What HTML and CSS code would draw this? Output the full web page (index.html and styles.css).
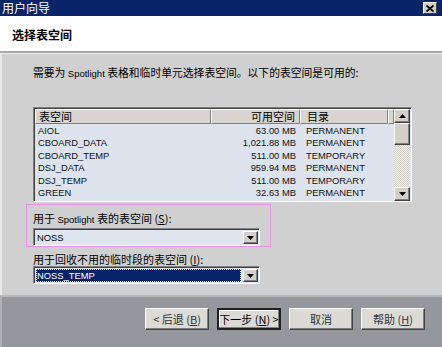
FILE: index.html
```html
<!DOCTYPE html>
<html>
<head>
<meta charset="utf-8">
<link rel="stylesheet" href="styles.css">
</head>
<body>
<div class="window">
  <div class="titlebar">
    <span class="title">用户向导</span>
    <span class="close">
      <svg width="8" height="7" viewBox="0 0 8 7"><path d="M0.5 0.5 L7.5 6.5 M7.5 0.5 L0.5 6.5" stroke="#000" stroke-width="1.8"/></svg>
    </span>
  </div>
  <div class="header"><span class="heading">选择表空间</span></div>
  <div class="hsep"></div>
  <div class="body">
    <p class="desc">需要为 <span class="lat">Spotlight</span> 表格和临时单元选择表空间。以下的表空间是可用的:</p>
    <div class="list">
      <div class="listmain">
        <div class="lhead">
          <div class="hc c1">表空间</div>
          <div class="hc c2">可用空间</div>
          <div class="hc c3">目录</div>
          <div class="hc c4"></div>
        </div>
        <div class="rows">
          <div class="row"><span class="c1">AIOL</span><span class="c2">63.00 MB</span><span class="c3">PERMANENT</span></div>
          <div class="row"><span class="c1">CBOARD_DATA</span><span class="c2">1,021.88 MB</span><span class="c3">PERMANENT</span></div>
          <div class="row"><span class="c1">CBOARD_TEMP</span><span class="c2">511.00 MB</span><span class="c3">TEMPORARY</span></div>
          <div class="row"><span class="c1">DSJ_DATA</span><span class="c2">959.94 MB</span><span class="c3">PERMANENT</span></div>
          <div class="row"><span class="c1">DSJ_TEMP</span><span class="c2">511.00 MB</span><span class="c3">TEMPORARY</span></div>
          <div class="row"><span class="c1">GREEN</span><span class="c2">32.63 MB</span><span class="c3">PERMANENT</span></div>
        </div>
      </div>
      <div class="vscroll">
        <div class="sbtn"><svg width="7" height="4" viewBox="0 0 7 4"><path d="M3.5 0 L7 4 L0 4 Z" fill="#000"/></svg></div>
        <div class="thumb"></div>
        <div class="track"></div>
        <div class="sbtn"><svg width="7" height="4" viewBox="0 0 7 4"><path d="M0 0 L7 0 L3.5 4 Z" fill="#000"/></svg></div>
      </div>
    </div>
    <div class="pinkbox">
      <div class="label">用于 <span class="lat">Spotlight</span> 表的表空间 (<u>S</u>):</div>
      <div class="combo">
        <span class="cval">NOSS</span>
        <span class="cbtn"><svg width="7" height="4" viewBox="0 0 7 4"><path d="M0 0 L7 0 L3.5 4 Z" fill="#000"/></svg></span>
      </div>
    </div>
    <div class="group2">
      <div class="label">用于回收不用的临时段的表空间 (<u>I</u>):</div>
      <div class="combo">
        <span class="cval sel">NOSS_TEMP</span>
        <span class="cbtn"><svg width="7" height="4" viewBox="0 0 7 4"><path d="M0 0 L7 0 L3.5 4 Z" fill="#000"/></svg></span>
      </div>
    </div>
  </div>
  <div class="footer">
    <button class="btn">&lt; 后退 (<u>B</u>)</button>
    <button class="btn default">下一步 (<u>N</u>) &gt;</button>
    <button class="btn">取消</button>
    <button class="btn">帮助 (<u>H</u>)</button>
  </div>
</div>
</body>
</html>
```

FILE: styles.css
```css
html, body {
  margin: 0;
  padding: 0;
}
body {
  font-family: "Liberation Sans", "Noto Sans CJK SC", sans-serif;
  font-size: 11px;
  color: #000;
}
.window {
  width: 442px;
  height: 347px;
  display: flex;
  flex-direction: column;
  overflow: hidden;
  background: #d0d0d0;
}
.titlebar {
  height: 16px;
  background: #0a246a;
  display: flex;
  align-items: center;
  justify-content: space-between;
  padding: 0 5px 0 2px;
  flex: none;
}
.title {
  color: #fff;
  font-family: "Noto Sans CJK SC", sans-serif;
  font-size: 12px;
  line-height: 16px;
}
.close {
  width: 12px;
  height: 10px;
  background: #d4d0c8;
  border: 1px solid;
  border-color: #fff #404040 #404040 #fff;
  display: flex;
  align-items: center;
  justify-content: center;
}
.header {
  height: 35px;
  background: #fff;
  display: flex;
  align-items: center;
  padding-left: 12px;
  flex: none;
}
.heading {
  font-family: "Noto Sans CJK SC", sans-serif;
  font-weight: bold;
  font-size: 12px;
  margin-top: 1px;
}
.hsep {
  height: 3px;
  border-top: 2px solid #a8a8a8;
  background: #ececec;
  box-sizing: border-box;
  flex: none;
}
.body {
  height: 241px;
  flex: none;
  box-sizing: border-box;
  padding: 11px 0 0 33px;
  border-left: 2px solid #e8e8e8;
  display: flex;
  flex-direction: column;
  align-items: flex-start;
}
.body > * { margin-left: -2px; }
.desc {
  margin-top: 0;
  margin-bottom: 0;
  line-height: 14px;
  font-family: "Noto Sans CJK SC", sans-serif;
  font-size: 10.8px;
}
.lat {
  font-family: "Liberation Sans", sans-serif;
  font-size: 9.5px;
}
.list {
  margin-top: 26px;
  width: 379px;
  height: 95px;
  box-sizing: border-box;
  border: 1px solid;
  border-color: #808080 #fff #fff #808080;
  box-shadow: inset 1px 1px 0 #404040;
  padding: 1px 1px 0 1px;
  background: #dce3ec;
  display: flex;
  overflow: hidden;
}
.listmain {
  width: 359px;
  display: flex;
  flex-direction: column;
}
.lhead {
  display: flex;
  height: 15px;
  flex: none;
}
.hc {
  box-sizing: border-box;
  height: 15px;
  background: #d8d5d0;
  border: 1px solid;
  border-color: #fff #808080 #808080 #fff;
  line-height: 13px;
  font-family: "Noto Sans CJK SC", sans-serif;
  font-size: 11px;
  padding: 0 3px;
}
.c1 { width: 176px; box-sizing: border-box; padding-left: 3px; }
.c2 { width: 89px; box-sizing: border-box; text-align: right; padding-right: 4px; }
.c3 { width: 88px; box-sizing: border-box; padding-left: 6px; }
.c4 { width: 6px; padding: 0; }
.hc.c1 { padding-left: 3px; }
.hc.c3 { padding-left: 6px; }
.rows {
  padding-top: 1px;
}
.row {
  display: flex;
  height: 12.4px;
  line-height: 12.4px;
  font-family: "Liberation Sans", sans-serif;
  font-size: 9.4px;
  color: #111;
  white-space: nowrap;
}
.vscroll {
  width: 16px;
  display: flex;
  flex-direction: column;
  flex: none;
}
.sbtn, .thumb {
  box-sizing: border-box;
  background: #d4d0c8;
  border: 1px solid;
  border-color: #fff #404040 #404040 #fff;
  box-shadow: inset -1px -1px 0 #808080;
  flex: none;
}
.sbtn {
  height: 14px;
  display: flex;
  align-items: center;
  justify-content: center;
}
.thumb {
  height: 22px;
}
.track {
  flex: 1;
  background-color: #f0f0f0;
  background-image: linear-gradient(45deg, #d4d0c8 25%, transparent 25%, transparent 75%, #d4d0c8 75%), linear-gradient(45deg, #d4d0c8 25%, transparent 25%, transparent 75%, #d4d0c8 75%);
  background-size: 2px 2px;
  background-position: 0 0, 1px 1px;
}
.pinkbox {
  margin-top: 2px;
  margin-left: -9px;
  width: 245px;
  height: 43px;
  box-sizing: border-box;
  border: 1px solid #e98ee9;
  padding: 6px 9px 0 6px;
}
.label {
  font-family: "Noto Sans CJK SC", sans-serif;
  font-size: 11px;
  line-height: 14px;
  white-space: nowrap;
}
.label .lat { font-size: 9.5px; }
.combo {
  margin-top: 1px;
  width: 227px;
  height: 18px;
  box-sizing: border-box;
  border: 1px solid;
  border-color: #808080 #fff #fff #808080;
  box-shadow: inset 1px 1px 0 #404040;
  padding: 2px 1px 1px 2px;
  background: #dfe6ef;
  display: flex;
  align-items: stretch;
}
.cval {
  flex: 1;
  font-family: "Liberation Sans", sans-serif;
  font-size: 9.4px;
  line-height: 13px;
  padding-left: 1px;
}
.cval.sel {
  background: #0a246a;
  color: #fff;
  margin-right: 2px;
  outline: 1px dotted #ffff80;
  outline-offset: -1px;
}
.cbtn {
  width: 15px;
  box-sizing: border-box;
  background: #d4d0c8;
  border: 1px solid;
  border-color: #fff #404040 #404040 #fff;
  box-shadow: inset -1px -1px 0 #808080;
  display: flex;
  align-items: center;
  justify-content: center;
}
.group2 {
  margin-top: 5px;
}
.group2 .combo { height: 18px; margin-top: 0; }
.footer {
  flex: 1;
  background: #96979c;
  border-top: 2px solid #b8b8b8;
  border-left: 2px solid #b0b0b4;
  display: flex;
  justify-content: flex-end;
  align-items: flex-start;
  gap: 8px;
  padding: 11px 17px 0 0;
}
.btn {
  width: 64px;
  height: 22px;
  box-sizing: border-box;
  background: #dcdad6;
  border: 1px solid;
  border-color: #fff #404040 #404040 #fff;
  box-shadow: inset -1px -1px 0 #808080;
  font-family: "Noto Sans CJK SC", sans-serif;
  font-size: 11px;
  color: #333;
  padding: 0;
  margin: 0;
  line-height: 18px;
  white-space: nowrap;
}
.btn.default {
  border: 2px solid #202020;
  box-shadow: inset -1px -1px 0 #808080, inset 1px 1px 0 #fff;
  color: #000;
}
```
